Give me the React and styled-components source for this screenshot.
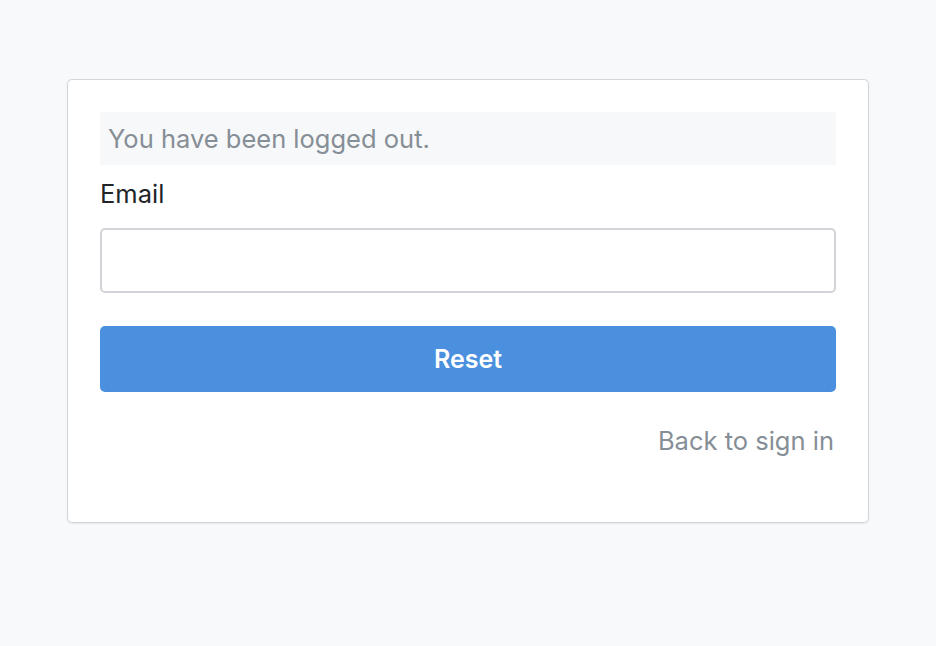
import React from 'react'
import styled, { createGlobalStyle } from 'styled-components'

const GlobalStyle = createGlobalStyle`
    html, body {
        margin:0;
        padding:0;
        background:#f8f9fa;
        font-family:Inter, "Liberation Sans", Arial, sans-serif;
    }
    * { box-sizing:border-box; }
`

const PageStyled = styled.div`
    min-height:646px;
    padding-top:79px;
    display:flex;
    justify-content:center;
    align-items:flex-start;
`

const CardStyled = styled.div`
    width:802px;
    background:#fff;
    border:1px solid #d2d5d9;
    border-radius:5px;
    box-shadow:0 1px 2px rgba(0,0,0,0.07);
    padding:32px 32px 31px;
    display:flex;
    flex-direction:column;
`

const AlertStyled = styled.div`
    background:#f7f8fa;
    color:#868e96;
    font-size:25.5px;
    line-height:37px;
    padding:8px 8px 8px 8px;
`

const LabelStyled = styled.label`
    display:block;
    margin-top:11px;
    color:#212529;
    font-size:25.5px;
    line-height:36px;
`

const InputStyled = styled.input`
    display:block;
    width:100%;
    height:65px;
    margin-top:16px;
    border:2px solid #d1d5da;
    border-radius:5px;
    outline:none;
    font:inherit;
    font-size:24px;
    padding:0 14px;
`

const ButtonStyled = styled.button`
    display:block;
    width:100%;
    height:66px;
    margin-top:33px;
    border:none;
    border-radius:5px;
    background:#4a90df;
    color:#fff;
    font-family:inherit;
    font-size:25px;
    font-weight:600;
    cursor:pointer;
`

const FooterStyled = styled.div`
    display:flex;
    justify-content:flex-end;
    margin-top:31px;
    padding-right:2px;
    height:68px;
`

const LinkStyled = styled.a`
    color:#868e96;
    font-size:25.5px;
    line-height:36px;
    text-decoration:none;
`

const App = () => {
    return (
        <>
            <GlobalStyle />
            <PageStyled>
                <CardStyled>
                    <AlertStyled>You have been logged out.</AlertStyled>
                    <LabelStyled htmlFor='email'>Email</LabelStyled>
                    <InputStyled id='email' type='email' autoComplete='off' />
                    <ButtonStyled type='button'>Reset</ButtonStyled>
                    <FooterStyled>
                        <LinkStyled href='#'>Back to sign in</LinkStyled>
                    </FooterStyled>
                </CardStyled>
            </PageStyled>
        </>
    )
}

export default App
